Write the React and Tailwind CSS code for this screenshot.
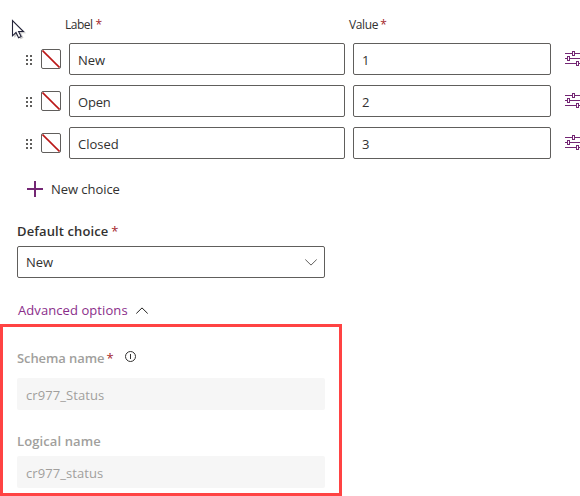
const choices = [
  { label: "New", value: 1, spacing: "tracking-[-0.1px]" },
  { label: "Open", value: 2, spacing: "tracking-[-0.2px]" },
  { label: "Closed", value: 3, spacing: "tracking-[0px]" },
];

function DragHandle() {
  return (
    <svg className="mt-[2px] block h-[10px] w-[6px] shrink-0" viewBox="0 0 6 10" fill="#605e5c" shapeRendering="crispEdges">
      {[0, 4, 8].map((y) => (
        <g key={y}>
          <rect x="0" y={y} width="2" height="2" />
          <rect x="4" y={y} width="2" height="2" />
        </g>
      ))}
    </svg>
  );
}

function Swatch() {
  return (
    <div className="ml-[9px] h-5 w-5 shrink-0 rounded-[2px] border border-[#605e5c]">
      <svg className="block h-[18px] w-[18px]" viewBox="0 0 18 18">
        <path d="M.5 .5L17.5 17.5" stroke="#bb1818" strokeWidth="1.6" />
      </svg>
    </div>
  );
}

function Sliders() {
  return (
    <svg className="-mt-px mb-px ml-[14px] block h-[15px] w-[16px] shrink-0" viewBox="0 0 16 15" fill="none" stroke="#742774" shapeRendering="crispEdges">
      <path d="M0 2.5H7M10 2.5H16M0 7.5H2M5 7.5H16M0 12.5H11M14 12.5H16" />
      <path d="M7.5 .5h2v4h-2zM2.5 5.5h2v4h-2zM11.5 10.5h2v4h-2z" />
    </svg>
  );
}

function Star({ className = "" }) {
  return <span className={`font-normal tracking-normal text-[#a4262c] ${className}`}>*</span>;
}

function Disabled({ children, className }) {
  return (
    <div className={`flex h-8 w-[308px] items-center rounded-[2px] bg-[#f6f6f6] pl-[9px] pt-[2px] text-[13px] text-[#a19f9d] ${className}`}>
      {children}
    </div>
  );
}

export default function App() {
  return (
    <div className="relative h-[496px] w-[580px] overflow-hidden bg-white font-['Open_Sans','Noto_Sans',sans-serif] text-[13px] leading-[18px] text-[#323130]">
      <svg className="absolute left-[11px] top-[18px] h-6 w-4" viewBox="0 0 16 24">
        <path d="M3.2 4.2v15.5l3.8-3.5 2.5 5 3-1.4-2.4-4.6h5z" fill="#aaa" opacity=".6" />
        <path d="M1.5 2.5v15.3l3.5-3.3 2.6 5.2 2.5-1.2-2.5-5h4.8z" fill="#fff" stroke="#24243a" strokeWidth="1.1" />
      </svg>
      <div className="flex h-[43px] pt-4 text-[12px]">
        <div className="ml-[65px] w-[284px] tracking-[-0.5px]">Label<Star className="ml-[3px]" /></div>
        <div className="tracking-[-0.35px]">Value<Star className="ml-[2px]" /></div>
      </div>
      <div className="flex flex-col gap-[10px]">
        {choices.map((c) => (
          <div key={c.value} className="flex h-8 items-center pl-[26px]">
            <DragHandle />
            <Swatch />
            <div className={`ml-2 flex h-8 w-[276px] shrink-0 items-center rounded-[2px] border border-[#605e5c] pl-[8px] pt-[2px] ${c.spacing}`}>{c.label}</div>
            <div className="ml-2 flex h-8 w-[198px] shrink-0 items-center rounded-[2px] border border-[#605e5c] pl-[8px] pt-[2px]">{c.value}</div>
            <Sliders />
          </div>
        ))}
      </div>
      <div className="mt-[21px] flex h-[18px] items-center pl-[27px]">
        <svg className="block h-4 w-4" viewBox="0 0 16 16" shapeRendering="crispEdges">
          <path d="M8 0V16M0 8H16" stroke="#742774" strokeWidth="2" />
        </svg>
        <span className="ml-2 tracking-[-0.05px]">New choice</span>
      </div>
      <div className="mt-6 h-[24px] pl-[17px] font-semibold tracking-[0.1px]">
        Default choice<Star className="ml-[3px]" />
      </div>
      <div className="ml-[17px] flex h-8 w-[308px] items-center justify-between rounded-[2px] border border-[#605e5c] pl-[8px] pr-[7px]">
        <span>New</span>
        <svg className="block h-[7px] w-[12px]" viewBox="0 0 12 7" fill="none" stroke="#605e5c">
          <path d="M.3 .5L6 6.1L11.7 .5" />
        </svg>
      </div>
      <div className="mt-[23px] flex h-[18px] items-center pl-[18px] text-[#8a2d8a]">
        <span className="w-[118px] tracking-[0.08px]">Advanced options</span>
        <svg className="block h-[7px] w-[12px]" viewBox="0 0 12 7" fill="none" stroke="#201f1e">
          <path d="M.3 6.5L6 .9L11.7 6.5" />
        </svg>
      </div>
      <div className="mt-[5px] h-[172px] w-[342px] border-[3px] border-[#ff4343] pl-[14px] pt-[22px]">
        <div className="flex h-[29px] font-semibold text-[#a19f9d]">
          <span className="tracking-[-0.08px]">Schema name</span>
          <Star className="ml-[2px]" />
          <svg className="ml-[11px] mt-[2px] block h-[11px] w-[11px]" viewBox="0 0 11 11" fill="none" stroke="#323130">
            <circle cx="5.5" cy="5.5" r="5" />
            <path d="M5.5 3v1M5.5 4v4" />
          </svg>
        </div>
        <Disabled className="tracking-[0.08px]">cr977_Status</Disabled>
        <div className="mt-[22px] h-[24px] font-semibold tracking-[0.1px] text-[#a19f9d]">Logical name</div>
        <Disabled className="tracking-[0.08px]">cr977_status</Disabled>
      </div>
    </div>
  );
}
